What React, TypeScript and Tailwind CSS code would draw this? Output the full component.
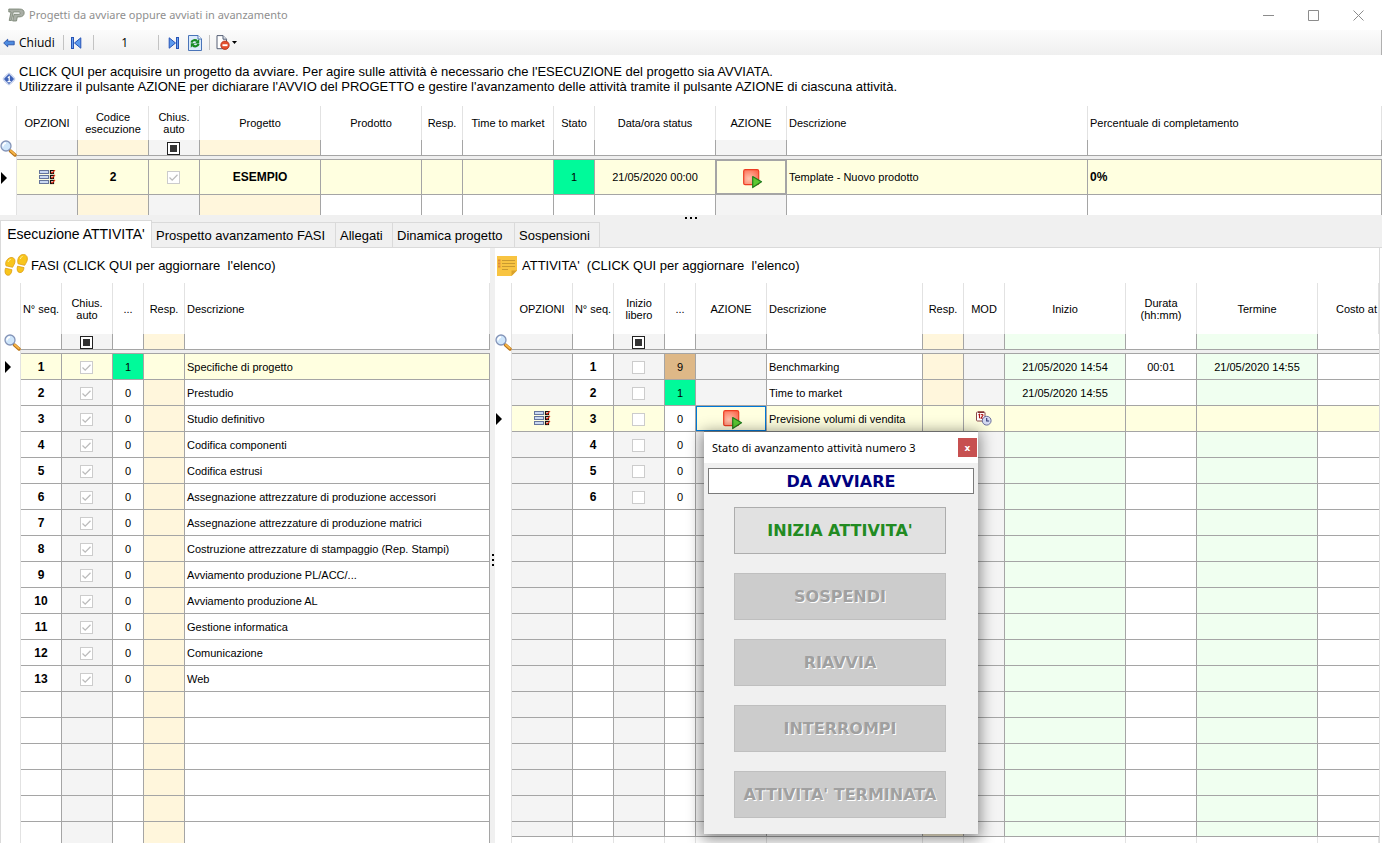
import type { ReactNode } from "react";
import clsx from "clsx";

type Column = {
  label: string;
  width?: string;
  tone?: string;
  left?: boolean;
  filterCheck?: boolean;
  // last column of a grid that runs on under the panel's edge
  open?: boolean;
};

const GREY = "bg-[#f4f4f4]";
const CREAM = "bg-[#fff6dc]";
const MINT = "bg-[#f0fff0]";
const ACTIVE = "bg-[#ffffe0]";
const LINE = "border-[#a5a5a5]";

const projectColumns: Column[] = [
  { label: "OPZIONI", width: "w-[61px]", tone: GREY },
  { label: "Codice esecuzione", width: "w-[71px]", tone: CREAM },
  { label: "Chius. auto", width: "w-[51px]", tone: GREY, filterCheck: true },
  { label: "Progetto", width: "w-[121px]", tone: CREAM },
  { label: "Prodotto", width: "w-[101px]" },
  { label: "Resp.", width: "w-[41px]" },
  { label: "Time to market", width: "w-[91px]" },
  { label: "Stato", width: "w-[41px]" },
  { label: "Data/ora status", width: "w-[121px]" },
  { label: "AZIONE", width: "w-[71px]", tone: GREY },
  { label: "Descrizione", width: "w-[301px]", left: true },
  { label: "Percentuale di completamento", left: true },
];

const phaseColumns: Column[] = [
  { label: "N° seq.", width: "w-[41px]" },
  { label: "Chius. auto", width: "w-[51px]", tone: GREY, filterCheck: true },
  { label: "...", width: "w-[31px]" },
  { label: "Resp.", width: "w-[41px]", tone: CREAM },
  { label: "Descrizione", left: true },
];

const activityColumns: Column[] = [
  { label: "OPZIONI", width: "w-[61px]", tone: GREY },
  { label: "N° seq.", width: "w-[41px]" },
  { label: "Inizio libero", width: "w-[51px]", tone: GREY, filterCheck: true },
  { label: "...", width: "w-[31px]" },
  { label: "AZIONE", width: "w-[71px]", tone: GREY },
  { label: "Descrizione", width: "w-[156px]", left: true },
  { label: "Resp.", width: "w-[41px]", tone: CREAM },
  { label: "MOD", width: "w-[41px]", tone: GREY },
  { label: "Inizio", width: "w-[121px]", tone: MINT },
  { label: "Durata (hh:mm)", width: "w-[71px]" },
  { label: "Termine", width: "w-[121px]", tone: MINT },
  { label: "Costo at", open: true },
];

const phases = [
  "Specifiche di progetto",
  "Prestudio",
  "Studio definitivo",
  "Codifica componenti",
  "Codifica estrusi",
  "Assegnazione attrezzature di produzione accessori",
  "Assegnazione attrezzature di produzione matrici",
  "Costruzione attrezzature di stampaggio (Rep. Stampi)",
  "Avviamento produzione PL/ACC/...",
  "Avviamento produzione AL",
  "Gestione informatica",
  "Comunicazione",
  "Web",
];

const activities = [
  { state: 9, name: "Benchmarking", start: "21/05/2020 14:54", time: "00:01", end: "21/05/2020 14:55" },
  { state: 1, name: "Time to market", start: "21/05/2020 14:55" },
  { state: 0, name: "Previsione volumi di vendita" },
  { state: 0, name: "" },
  { state: 0, name: "" },
  { state: 0, name: "" },
];

const tabs = [
  { label: "Prospetto avanzamento FASI", width: "w-[184px]" },
  { label: "Allegati", width: "w-[57px]" },
  { label: "Dinamica progetto", width: "w-[122px]" },
  { label: "Sospensioni", width: "w-[85px]" },
];

/* ---------- icons ---------- */

const SearchIcon = () => (
  <svg width="17" height="17" viewBox="0 0 17 17" className="block">
    <path d="M10.5 11l4.5 4" stroke="#b8741a" strokeWidth="3.4" strokeLinecap="round" />
    <path d="M10.8 10.8l4 3.6" stroke="#f9b84a" strokeWidth="1.8" strokeLinecap="round" />
    <circle cx="6" cy="6" r="5" fill="#cfe6fb" stroke="#8494b8" strokeWidth="1.3" />
    <path d="M3 6.5a3 3 0 013-3.4" stroke="#fff" strokeWidth="1.6" fill="none" />
  </svg>
);

const OptionsIcon = () => (
  <svg width="17" height="15" viewBox="0 0 17 15" className="mx-auto block">
    {[1, 6, 11].map((y) => (
      <g key={y}>
        <rect x="0.5" y={y - 0.5} width="9" height="3" fill="#c9d8f2" stroke="#66759c" />
        <rect x="11.5" y={y - 0.5} width="3" height="3" fill="#fff" stroke="#111" strokeWidth="1.2" />
        <path d={`M12.3 ${y + 1}l1 1L16 ${y - 1.2}`} stroke="#e8321c" strokeWidth="1.1" fill="none" />
      </g>
    ))}
  </svg>
);

const StartIcon = () => (
  <svg width="20" height="20" viewBox="0 0 20 20" className="mx-auto block">
    <defs>
      <radialGradient id="stopFill" cx="0.35" cy="0.6" r="0.8">
        <stop offset="0" stopColor="#ffc4ae" />
        <stop offset="1" stopColor="#fb6248" />
      </radialGradient>
    </defs>
    <rect x="0.7" y="0.7" width="15" height="15" rx="1.5" fill="url(#stopFill)" stroke="#ee3d22" strokeWidth="1.2" />
    <path d="M9.7 7.6l8.8 5.2-8.8 5.8z" fill="#5cc832" stroke="#1f7a1c" strokeWidth="1.2" strokeLinejoin="round" />
  </svg>
);

const ScheduleIcon = () => (
  <svg width="16" height="15" viewBox="0 0 16 15" className="mx-auto block">
    <rect x="0.5" y="1" width="8.5" height="9" rx="1" fill="#fff" stroke="#8a4a4a" />
    <path d="M2 1.2h6" stroke="#7a2424" strokeWidth="1.4" />
    <path d="M2.5 4l1-.7v4M5 4.2c.2-1 2-1 2 .1 0 1-2 1.6-2 2.9h2.2" stroke="#b01515" fill="none" strokeWidth="1.1" />
    <circle cx="10.7" cy="9.7" r="4.4" fill="#d5daf3" stroke="#6b6f9c" />
    <path d="M10.7 7v3h2.4" stroke="#2d3570" fill="none" strokeWidth="1.1" />
  </svg>
);

const FootstepsIcon = () => (
  <svg width="24" height="23" viewBox="0 0 24 23" className="block shrink-0">
    <g fill="#f8c51c" stroke="#dc9c10" strokeWidth="0.8">
      <path d="M5 4.200C7.600 2.600 10.900 3.600 11 7c.1 2.500-1.500 4.400-2.400 6.300L2 11.800C1 9 2 6 5 4.200z" />
      <path d="M1.500 14.200l6.400 1.500c-.2 3.400-1.600 5.700-4 5.600C1.200 21.100.4 17.600 1.500 14.200z" />
      <path d="M17.500.8c3.100-1.200 6 .6 5.900 4 0 2.800-1.700 4.600-2.700 6.500l-6.600-1.500C13 6.500 14.200 2.100 17.500.8z" />
      <path d="M13.600 12.200l6.400 1.400c-.3 3.300-1.900 5.200-4.200 5-2.600-.3-3.300-3.600-2.200-6.400z" />
    </g>
    <path d="M4.200 8c.4-1.400 1.200-2.300 2.500-2.600M16.400 5c.3-1.400 1-2.300 2.200-2.600" stroke="#fff0a0" fill="none" />
  </svg>
);

const NoteIcon = () => (
  <svg width="20" height="20" viewBox="0 0 20 20" className="block shrink-0">
    <path d="M0 0h20v14.500L14.500 20H0z" fill="#f8c441" />
    <path d="M14.500 20v-5.500H20z" fill="#d9a22c" />
    <path d="M5 4.500h13M5 7.500h13M5 10.500h13M5 13.500h6" stroke="#c99a30" />
    <path d="M1 4.500h2.500M1 7.500h2.500M1 10.500h2.500" stroke="#e08a3a" strokeWidth="1.800" />
  </svg>
);

const InfoIcon = () => (
  <svg width="14" height="14" viewBox="0 0 14 14" className="block shrink-0">
    <rect x="2.300" y="2.300" width="9.400" height="9.400" rx="2" transform="rotate(45 7 7)" fill="#e3eafa" stroke="#a9b9de" strokeWidth="0.700" />
    <rect x="3.300" y="3.300" width="7.400" height="7.400" rx="1" transform="rotate(45 7 7)" fill="#3f63b8" />
    <path d="M5.800 5.700l1.400-1V9.500M5.500 9.700h3.300" stroke="#fff" strokeWidth="1.200" fill="none" />
  </svg>
);

const LogoIcon = () => (
  <svg width="17" height="14" viewBox="0 0 17 14" className="block shrink-0">
    <path
      d="M.8 1h10.700c3 0 4.700 1.400 4.700 3.800 0 2.500-1.700 4.100-4.700 4.100H9.300L8.500 13H4.600L6 6.300h5.200c1.300 0 1.300-2.300 0-2.300H5.300L3.500 12.500H1.200L3 4H.8z"
      fill="#a9aea6"
      stroke="#75806f"
      strokeWidth="0.800"
    />
  </svg>
);

const BackIcon = () => (
  <svg width="12" height="10" viewBox="0 0 12 10" className="block shrink-0">
    <path d="M.7 5l4-3.800v2h6.500v3.600H4.700v2z" fill="#4d8be0" stroke="#2a52a8" strokeWidth="0.900" />
  </svg>
);

const StepIcon = ({ last }: { last?: boolean }) => (
  <svg width="11" height="12" viewBox="0 0 11 12" className={clsx("block", last && "rotate-180")}>
    <rect x="0.500" y="0.500" width="2" height="11" fill="#6aa2ee" stroke="#2753b5" />
    <path d="M9.800.8v10.400L3.500 6z" fill="#5d9bee" stroke="#2753b5" strokeLinejoin="round" />
  </svg>
);

const RefreshIcon = () => (
  <svg width="14" height="16" viewBox="0 0 14 16" className="block">
    <path d="M.5.500h9.500l3.500 3.500v11.500H.5z" fill="#dcebfb" stroke="#4a74b8" />
    <path d="M10 .5v3.500h3.500" fill="#fff" stroke="#4a74b8" />
    <path d="M3.400 7.600c.8-2.600 4-3.200 5.700-1.500M10.600 8.900c-.8 2.600-4 3.200-5.700 1.500" stroke="#168a22" strokeWidth="2.200" fill="none" />
    <path d="M11.200 3.900v4.500H6.800zM2.800 12.800V8.300h4.400z" fill="#168a22" />
  </svg>
);

const DocumentIcon = () => (
  <svg width="14" height="15" viewBox="0 0 14 15" className="block">
    <path d="M1 .6h6l3.500 3.600v9.500H1z" fill="#fff" stroke="#555f75" />
    <path d="M7 .6v3.600h3.500" fill="#e4e8f0" stroke="#555f75" />
    <circle cx="9" cy="10.200" r="4.200" fill="#e5502e" stroke="#b03018" strokeWidth="0.800" />
    <path d="M6.500 10.200h5" stroke="#fff" strokeWidth="1.900" />
  </svg>
);

const RowMarker = () => (
  <svg width="6" height="12" viewBox="0 0 6 12" className="ml-px block">
    <path d="M0 0l6 6-6 6z" fill="#000" />
  </svg>
);

const Dots = ({ className }: { className: string }) => (
  <div className={clsx("flex gap-[3px]", className)}>
    <i className="size-0.5 bg-black"></i>
    <i className="size-0.5 bg-black"></i>
    <i className="size-0.5 bg-black"></i>
  </div>
);

/* ---------- grid pieces ---------- */

const Check = ({ label, checked }: { label: string; checked?: boolean }) => (
  <div className="flex justify-center pt-px pr-px">
    <span className="relative size-[13px]">
      <input
        type="checkbox"
        aria-label={label}
        checked={!!checked}
        disabled
        readOnly
        className="block size-[13px] appearance-none border border-[#cccccc] bg-white"
      />
      {checked && (
        <svg viewBox="0 0 13 13" className="pointer-events-none absolute inset-0">
          <path d="M2.500 6.500l2.700 2.700 5.300-5.400" stroke="#bcbcbc" strokeWidth="1.300" fill="none" />
        </svg>
      )}
    </span>
  </div>
);

const FilterCheck = ({ label }: { label: string }) => (
  <div className="flex justify-center pt-px pr-px">
    <span className="relative size-[13px]">
      <input
        type="checkbox"
        aria-label={`Filtro ${label}`}
        className="block size-[13px] appearance-none border border-[#222] bg-white"
      />
      <span className="pointer-events-none absolute inset-[3px] bg-[#333]"></span>
    </span>
  </div>
);

const GridHead = ({ columns, height }: { columns: Column[]; height: string }) => (
  <thead>
    <tr className={height}>
      <td className="w-[17px] border-r border-[#e2e2e2]"></td>
      {columns.map((c) => (
        <th
          key={c.label}
          scope="col"
          className={clsx(
            "border-r border-[#e2e2e2] font-normal",
            c.width,
            c.open ? "pl-[18px] text-left whitespace-nowrap" : c.left ? "px-0.5 text-left" : "text-center",
            c.label === "N° seq." && "whitespace-nowrap"
          )}
        >
          {c.label}
        </th>
      ))}
    </tr>
    <tr className="h-4">
      <td rowSpan={2} className="border-r border-[#e2e2e2] align-top">
        <div className="h-4">
          <SearchIcon />
        </div>
      </td>
      {columns.map((c) => (
        <td key={c.label} className={clsx("border-b", !c.open && "border-r", LINE, c.tone)}>
          {c.filterCheck && <FilterCheck label={c.label} />}
        </td>
      ))}
    </tr>
    <tr className="h-1">
      <td colSpan={columns.length} className={clsx("border-b bg-[#efefef]", LINE)}></td>
    </tr>
  </thead>
);

type RowProps = {
  columns: Column[];
  cells?: ReactNode[];
  tones?: Record<number, string>;
  active?: boolean;
  height?: string;
};

const GridRow = ({ columns, cells = [], tones = {}, active, height = "h-[26px]" }: RowProps) => (
  <tr className={height}>
    <td className="border-r border-[#e2e2e2]">{active && <RowMarker />}</td>
    {columns.map((c, i) => (
      <td
        key={c.label}
        className={clsx(
          "relative border-b",
          !c.open && "border-r",
          LINE,
          c.left ? "px-0.5 text-left whitespace-nowrap" : "text-center",
          tones[i] ?? (active ? ACTIVE : c.tone)
        )}
      >
        {cells[i]}
      </td>
    ))}
  </tr>
);

const Grid = ({ children }: { children: ReactNode }) => (
  <table className="w-full shrink-0 table-fixed border-separate border-spacing-0 text-[11px] leading-3">
    {children}
  </table>
);

const Bold = ({ children }: { children: ReactNode }) => <b className="text-xs leading-3">{children}</b>;

const stateTone = (state: number) =>
  state === 9 ? "bg-[#deb887]" : state === 1 ? "bg-[#00fa9a]" : "bg-white";

const StatusDialog = () => (
  <div
    role="dialog"
    aria-label="Stato di avanzamento attività numero 3"
    className="absolute top-full left-2 z-10 w-[274px] border-t border-[#6b6b6b] bg-[#f0f0f0] pb-4 shadow-[0_3px_14px_2px_rgba(0,0,0,0.45)]"
  >
    <div className="flex h-[31px] items-center justify-between bg-white pr-px pl-2">
      <span className="font-['Noto_Sans',sans-serif] text-[11px] leading-4">Stato di avanzamento attività numero 3</span>
      <button type="button" aria-label="Chiudi" className="size-[19px] bg-[#c75050] font-['DejaVu_Sans',sans-serif] text-[9px] leading-4 font-bold text-white">
        x
      </button>
    </div>
    <div className="px-1 pt-[5px] font-['DejaVu_Sans',sans-serif] text-base font-bold">
      <input
        aria-label="Stato"
        readOnly
        value="DA AVVIARE"
        className="block h-[26px] w-full border border-[#7a7a7a] bg-white text-center text-[#000080]"
      />
    </div>
    <div className="flex flex-col gap-[19px] pt-[13px] pr-8 pl-[30px] font-['DejaVu_Sans',sans-serif] text-base font-bold whitespace-nowrap">
      <button type="button" className="flex h-[47px] items-center justify-center border border-[#adadad] bg-[#e1e1e1] text-[#228b22]">
        INIZIA ATTIVITA'
      </button>
      {["SOSPENDI", "RIAVVIA", "INTERROMPI", "ATTIVITA' TERMINATA"].map((label) => (
        <button
          key={label}
          type="button"
          disabled
          className="flex h-[47px] items-center justify-center border border-[#bfbfbf] bg-[#cccccc] text-[#a0a0a0] [text-shadow:1px_1px_0_#fff]"
        >
          {label}
        </button>
      ))}
    </div>
  </div>
);

const ToolSeparator = () => <span className="h-[15px] w-px bg-[#c3c3c3]"></span>;

const App = () => {
  return (
    <div className="flex h-screen flex-col overflow-hidden bg-white font-['Liberation_Sans',Arial,sans-serif] text-black">
      <header className="flex h-[30px] shrink-0 items-center px-2">
        <LogoIcon />
        <h1 className="ml-1 font-['Noto_Sans',sans-serif] text-[11px] text-[#8f8f8f]">
          Progetti da avviare oppure avviati in avanzamento
        </h1>
        <div className="mr-2.5 ml-auto flex items-center gap-[34px]">
          <button type="button" aria-label="Riduci a icona">
            <svg width="11" height="11" stroke="#8c8c8c"><path d="M0 5.500h11" /></svg>
          </button>
          <button type="button" aria-label="Ingrandisci">
            <svg width="11" height="11" stroke="#8c8c8c" fill="none"><path d="M.5.500h10v10h-10z" /></svg>
          </button>
          <button type="button" aria-label="Chiudi finestra">
            <svg width="11" height="11" stroke="#8c8c8c"><path d="M.5.500l10 10M10.500.500l-10 10" /></svg>
          </button>
        </div>
      </header>

      <div className="flex h-[25px] shrink-0 items-center border-r border-[#b0b0b0] bg-gradient-to-b from-[#fcfcfc] to-[#efefef] pl-[3px] font-['Open_Sans',sans-serif] text-xs">
        <button type="button" className="mr-2 flex items-center gap-1">
          <BackIcon />
          Chiudi
        </button>
        <ToolSeparator />
        <button type="button" aria-label="Primo" className="mr-[11px] ml-[7px]"><StepIcon /></button>
        <ToolSeparator />
        <input aria-label="Posizione" defaultValue="1" className="w-16 bg-transparent pr-0.5 text-center" />
        <ToolSeparator />
        <button type="button" aria-label="Ultimo" className="ml-[9px]"><StepIcon last /></button>
        <button type="button" aria-label="Aggiorna" className="mr-[7px] ml-[9px]"><RefreshIcon /></button>
        <ToolSeparator />
        <button type="button" aria-label="Documento" className="ml-1.5 flex items-center gap-0.5">
          <DocumentIcon />
          <svg width="5" height="3"><path d="M0 0h5L2.500 3z" /></svg>
        </button>
      </div>

      <div className="flex h-[51px] shrink-0 items-center gap-[3px] pb-1 pl-0.5 text-[13px] leading-[15px]">
        <InfoIcon />
        <p>
          CLICK QUI per acquisire un progetto da avviare. Per agire sulle attività è necessario che l'ESECUZIONE del
          progetto sia AVVIATA.
          <br />
          Utilizzare il pulsante AZIONE per dichiarare l'AVVIO del PROGETTO e gestire l'avanzamento delle attività
          tramite il pulsante AZIONE di ciascuna attività.
        </p>
      </div>

      <Grid>
        <GridHead columns={projectColumns} height="h-[34px]" />
        <tbody>
          <GridRow
            columns={projectColumns}
            height="h-[35px]"
            active
            tones={{ 7: "bg-[#00fa9a]" }}
            cells={[
              <OptionsIcon />,
              <Bold>2</Bold>,
              <Check label="Chiusura automatica" checked />,
              <Bold>ESEMPIO</Bold>,
              "",
              "",
              "",
              "1",
              "21/05/2020 00:00",
              <button type="button" aria-label="Azione" className="block h-[34px] w-full border border-[#a5a5a5] pt-[3px] pl-[3px]">
                <StartIcon />
              </button>,
              "Template - Nuovo prodotto",
              <Bold>0%</Bold>,
            ]}
          />
          <tr className="h-5">
            <td className="border-r border-[#e2e2e2]"></td>
            {projectColumns.map((c) => (
              <td key={c.label} className={clsx("border-r", LINE, c.tone)}></td>
            ))}
          </tr>
        </tbody>
      </Grid>

      <div className="relative flex h-[33px] shrink-0 items-end bg-[#f0f0f0] text-[13px]">
        <Dots className="absolute top-0.5 left-1/2 -translate-x-1/2" />
        <button type="button" className="h-7 w-[152px] border border-b-0 border-[#dadada] bg-white pb-0.5 text-sm whitespace-nowrap">
          Esecuzione ATTIVITA'
        </button>
        <div className="flex flex-1 border-b border-[#dadada]">
          {tabs.map((t) => (
            <button
              key={t.label}
              type="button"
              className={clsx("h-[25px] border-t border-r border-[#dadada] pt-0.5 pl-1 text-left whitespace-nowrap", t.width)}
            >
              {t.label}
            </button>
          ))}
        </div>
      </div>

      <main className="mr-0.5 flex min-h-0 flex-1 border-x border-[#dadada]">
        <section className="w-[489px] shrink-0 overflow-hidden pl-[3px]">
          <h2 className="flex h-[35px] items-center gap-[3px] text-[13px]">
            <FootstepsIcon />
            <span className="whitespace-pre">FASI (CLICK QUI per aggiornare  l'elenco)</span>
          </h2>
          <Grid>
            <GridHead columns={phaseColumns} height="h-[51px]" />
            <tbody>
              {phases.map((name, i) => (
                <GridRow
                  key={name}
                  columns={phaseColumns}
                  active={i === 0}
                  tones={i === 0 ? { 2: stateTone(1) } : {}}
                  cells={[
                    <Bold>{i + 1}</Bold>,
                    <Check label={`Chiusura automatica fase ${i + 1}`} checked />,
                    i === 0 ? "1" : "0",
                    "",
                    name,
                  ]}
                />
              ))}
              {Array.from({ length: 6 }, (_, i) => (
                <GridRow key={i} columns={phaseColumns} />
              ))}
            </tbody>
          </Grid>
        </section>

        <div className="flex w-[5px] shrink-0 items-center justify-center bg-[#f0f0f0] pt-7">
          <Dots className="flex-col" />
        </div>

        <section className="min-w-0 flex-1 overflow-hidden">
          <h2 className="flex h-[35px] items-center gap-[5px] pl-0.5 text-[13px]">
            <NoteIcon />
            <span className="whitespace-pre">ATTIVITA'  (CLICK QUI per aggiornare  l'elenco)</span>
          </h2>
          <Grid>
            <GridHead columns={activityColumns} height="h-[51px]" />
            <tbody>
              {activities.map((a, i) => {
                const active = i === 2;
                return (
                  <GridRow
                    key={i}
                    columns={activityColumns}
                    active={active}
                    tones={{ 3: stateTone(a.state) }}
                    cells={[
                      active && <OptionsIcon />,
                      <Bold>{i + 1}</Bold>,
                      <Check label={`Inizio libero attività ${i + 1}`} />,
                      a.state,
                      active && (
                        <>
                          <button type="button" aria-label="Azione" className="block h-[25px] w-full border border-[#0078d7] pt-[3px] pl-[3px]">
                            <StartIcon />
                          </button>
                          <StatusDialog />
                        </>
                      ),
                      a.name,
                      "",
                      active && <ScheduleIcon />,
                      a.start,
                      a.time,
                      a.end,
                    ]}
                  />
                );
              })}
              {Array.from({ length: 12 }, (_, i) => (
                <GridRow key={i} columns={activityColumns} />
              ))}
              <GridRow columns={activityColumns} height="h-[15px]" />
              <tr className="h-4">
                <td className="border-r border-[#e2e2e2]"></td>
                {activityColumns.map((c) => (
                  <td key={c.label} className="border-r border-[#e2e2e2]"></td>
                ))}
              </tr>
            </tbody>
          </Grid>
        </section>
      </main>
    </div>
  );
};

export default App;
